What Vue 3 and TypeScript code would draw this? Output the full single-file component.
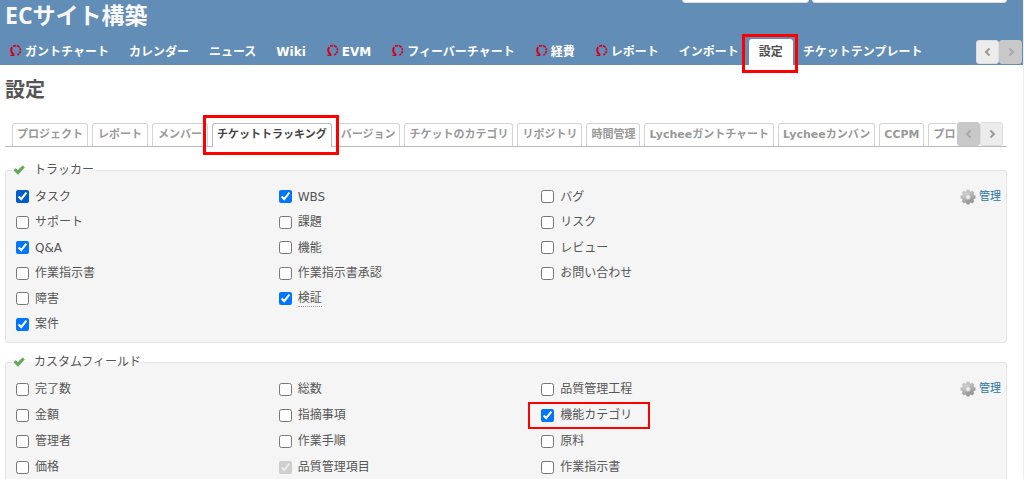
<script setup lang="ts">
import { ref } from 'vue'

interface NavItem { text: string; icon?: boolean; selected?: boolean }
interface Choice { text: string; checked?: boolean; disabled?: boolean; hovered?: boolean; hint?: string; marked?: boolean }
interface Group { id: string; title: string; choices: Choice[] }

const nav: NavItem[] = [
  { text: 'ガントチャート', icon: true },
  { text: 'カレンダー' },
  { text: 'ニュース' },
  { text: 'Wiki' },
  { text: 'EVM', icon: true },
  { text: 'フィーバーチャート', icon: true },
  { text: '経費', icon: true },
  { text: 'レポート', icon: true },
  { text: 'インポート' },
  { text: '設定', selected: true },
  { text: 'チケットテンプレート' },
]

const tabs: string[] = [
  'プロジェクト', 'レポート', 'メンバー', 'チケットトラッキング', 'バージョン', 'チケットのカテゴリ',
  'リポジトリ', '時間管理', 'Lycheeガントチャート', 'Lycheeカンバン', 'CCPM', 'プロ',
]
const activeTab = 3

const groups = ref<Group[]>([
  {
    id: 'tracker',
    title: 'トラッカー',
    choices: [
      { text: 'タスク', checked: true, hovered: true }, { text: 'WBS', checked: true }, { text: 'バグ' },
      { text: 'サポート' }, { text: '課題' }, { text: 'リスク' },
      { text: 'Q&A', checked: true }, { text: '機能' }, { text: 'レビュー' },
      { text: '作業指示書' }, { text: '作業指示書承認' }, { text: 'お問い合わせ' },
      { text: '障害' }, { text: '検証', checked: true, hint: '検証' }, { text: '' },
      { text: '案件', checked: true },
    ],
  },
  {
    id: 'field',
    title: 'カスタムフィールド',
    choices: [
      { text: '完了数' }, { text: '総数' }, { text: '品質管理工程' },
      { text: '金額' }, { text: '指摘事項' }, { text: '機能カテゴリ', checked: true, marked: true },
      { text: '管理者' }, { text: '作業手順' }, { text: '原料' },
      { text: '価格' }, { text: '品質管理項目', checked: true, disabled: true }, { text: '作業指示書' },
    ],
  },
])
</script>

<template>
  <div class="page">
    <header class="header">
      <div class="quick">
        <input class="search" type="text" aria-label="検索" />
        <select class="jump" aria-label="プロジェクトへ移動"></select>
      </div>
      <h1>ECサイト構築</h1>
      <div class="nav-row">
        <nav class="nav">
          <a v-for="n in nav" :key="n.text" href="#" :class="{ selected: n.selected }">
            <svg v-if="n.icon" class="ring" viewBox="0 0 13 13" aria-hidden="true">
              <path d="M4.6 10.3A4.8 4.8 0 0 1 3.2 3.2" stroke-width="2" />
              <path d="M4.1 2.4A4.8 4.8 0 0 1 10.6 3.6" stroke-width="1.7" stroke-dasharray="3.2 0.7" />
              <path d="M11 4.4A4.8 4.8 0 0 1 8 11" stroke-width="1.7" stroke-dasharray="2 0.8" />
              <path d="M1.4 11.4H4.8V9.6" stroke-width="1.2" />
            </svg>
            <span>{{ n.text }}</span>
          </a>
        </nav>
        <div class="arrows">
          <button type="button" aria-label="前へ"><svg viewBox="0 0 8 10"><path d="M5.5 1.5L2 5l3.5 3.5" /></svg></button>
          <button type="button" class="off" disabled aria-label="次へ"><svg viewBox="0 0 8 10"><path d="M2.5 1.5L6 5 2.5 8.5" /></svg></button>
        </div>
      </div>
    </header>

    <main class="content">
      <h2>設定</h2>
      <div class="tab-row">
        <div class="tabs">
          <a v-for="(t, i) in tabs" :key="i" href="#" :class="{ selected: i === activeTab }">{{ t }}</a>
        </div>
        <div class="arrows">
          <button type="button" class="off" disabled aria-label="前のタブ"><svg viewBox="0 0 8 10"><path d="M5.5 1.5L2 5l3.5 3.5" /></svg></button>
          <button type="button" aria-label="次のタブ"><svg viewBox="0 0 8 10"><path d="M2.5 1.5L6 5 2.5 8.5" /></svg></button>
        </div>
      </div>

      <fieldset v-for="g in groups" :key="g.id" :class="g.id">
        <legend>
          <svg class="tick" viewBox="0 0 12 10" aria-hidden="true"><path d="M0.8 5.2L3 3.6 4.8 5.6 9.6 0.8 11.4 2.4 5 9.4Z" /></svg>
          <span>{{ g.title }}</span>
        </legend>
        <div class="body">
          <div class="choices">
            <div v-for="(c, i) in g.choices" :key="i" class="cell">
              <label v-if="c.text" :class="{ marked: c.marked }">
                <input v-model="c.checked" type="checkbox" :disabled="c.disabled" :class="{ hovered: c.hovered }" />
                <span :class="{ hint: c.hint }" :title="c.hint">{{ c.text }}</span>
              </label>
            </div>
          </div>
          <a class="manage" href="#">
            <svg class="gear" viewBox="0 0 16 16" aria-hidden="true">
              <defs>
                <linearGradient :id="'metal-' + g.id" x1="0" y1="0" x2="0.6" y2="1">
                  <stop offset="0" stop-color="#dadada" />
                  <stop offset="1" stop-color="#959595" />
                </linearGradient>
              </defs>
              <g :stroke="`url(#metal-${g.id})`" :fill="`url(#metal-${g.id})`">
                <circle cx="8" cy="8" r="4.4" fill="none" stroke-width="3.6" />
                <path d="M6.5 0.4h3l0.5 3h-4zM6.5 15.6h3l0.5-3h-4zM0.4 6.5v3l3 0.5v-4zM15.6 6.5v3l-3 0.5v-4zM1.6 3.8L3.8 1.6 6 3.4 3.4 6zM14.4 3.8L12.2 1.6 10 3.4 12.6 6zM1.6 12.2L3.8 14.4 6 12.6 3.4 10zM14.4 12.2L12.2 14.4 10 12.6 12.6 10z" stroke="none" />
              </g>
              <circle cx="8" cy="8" r="2.3" fill="#f0f0f0" stroke="#a5a5a5" stroke-width="0.6" />
            </svg>
            <span>管理</span>
          </a>
        </div>
      </fieldset>
    </main>
  </div>
</template>

<style>
body {
  margin: 0;
  background: #fff;
}
</style>

<style scoped>
* {
  box-sizing: border-box;
}
.page {
  height: 100vh;
  overflow: hidden;
  border-right: 1px solid #eee;
  color: #555;
  font: 12px/20px "DejaVu Sans", "Noto Sans CJK JP", sans-serif;
}
a {
  text-decoration: none;
}
.header {
  background: #628db6;
}
.quick {
  display: flex;
  justify-content: flex-end;
  gap: 3px;
  height: 3px;
  margin-right: 16px;
  align-items: flex-end;
}
.search,
.jump {
  height: 24px;
  padding: 0;
  border: 1px solid #ddd;
  border-radius: 3px;
  background: #fff;
  appearance: none;
}
.search {
  width: 127px;
}
.jump {
  width: 195px;
}
h1 {
  margin: 0;
  padding: 0 5px;
  height: 36px;
  color: #f8f8f8;
  font: bold 23px/24px "Open Sans", "Noto Sans CJK JP", sans-serif;
}
.nav-row {
  display: flex;
  align-items: flex-end;
  justify-content: space-between;
}
.nav {
  display: flex;
  margin-left: -1px;
}
.nav a {
  position: relative;
  display: flex;
  align-items: center;
  gap: 3px;
  height: 26px;
  padding: 0 10px;
  color: #fff;
  font-weight: bold;
  white-space: nowrap;
  border-radius: 3px 3px 0 0;
}
.nav a.selected {
  background: #fff;
  color: #505050;
}
.nav a.selected::after {
  content: "";
  position: absolute;
  inset: -5px -5px -8px -7px;
  border: 3px solid #f00;
}
.ring {
  width: 13px;
  height: 13px;
  margin-bottom: 3px;
  fill: none;
  stroke: #d8001c;
}
.arrows {
  display: flex;
  flex: none;
}
.nav-row .arrows {
  padding: 0 1px 1px 0;
}
.arrows button {
  display: grid;
  place-items: center;
  width: 23px;
  height: 24px;
  padding: 0;
  border: 1px solid #ddd;
  border-radius: 3px;
  background: #ececec;
}
.arrows button.off {
  border-color: #c8c8c8;
  background: #c8c8c8;
}
.arrows svg {
  width: 8px;
  height: 10px;
  fill: none;
  stroke: #999;
  stroke-width: 2;
}
.arrows .off svg {
  stroke: #a8a8a8;
}
.content {
  padding: 0 16px 0 5px;
}
h2 {
  margin: 0;
  padding: 10px 0 17px;
  font: bold 20px/30px "Open Sans", "Noto Sans CJK JP", sans-serif;
}
.tab-row {
  display: flex;
  align-items: flex-end;
  padding-right: 4px;
  border-bottom: 1px solid #bbb;
}
.tabs {
  display: flex;
  flex: 1;
  gap: 4px;
  min-width: 0;
  padding-left: 7px;
  overflow-x: clip;
}
.tabs a {
  position: relative;
  flex: none;
  height: 23px;
  padding: 0 4px;
  border: 1px solid #d4d4d4;
  border-bottom: 0;
  border-radius: 3px 3px 0 0;
  color: #999;
  font-size: 11px;
  line-height: 22px;
  font-weight: bold;
  background: #fff;
}
.tabs a:nth-child(2),
.tabs a:nth-child(3) {
  padding: 0 5px;
}
.tabs a:last-child {
  min-width: 60px;
}
.tabs a.selected {
  z-index: 1;
  height: 24px;
  margin-bottom: -1px;
  border-color: #bbb;
  color: #444;
}
.tabs a.selected::after {
  content: "";
  position: absolute;
  inset: -9px -8px -8px -10px;
  border: 3px solid #f00;
}
fieldset {
  min-width: 0;
  margin: 13px 0 0;
  padding: 4px 5px 5px 10px;
  border: 1px solid #e4e4e4;
  border-radius: 3px;
  background: #f5f5f5;
}
fieldset + fieldset {
  margin-top: 9px;
}
legend {
  display: flex;
  align-items: center;
  gap: 9px;
  margin-left: -4px;
  padding: 0 2px 0 1px;
}
.tick {
  width: 12px;
  height: 10px;
  fill: #5eae55;
  stroke: #4c9545;
  stroke-width: 0.5;
}
.body {
  display: flex;
  align-items: flex-start;
  justify-content: space-between;
}
.choices {
  display: grid;
  grid-template-columns: repeat(3, 1fr);
  grid-auto-rows: 25px 26px;
  width: 80%;
}
.field .choices {
  grid-auto-rows: 26px;
}
.cell {
  display: flex;
  align-items: center;
}
label {
  position: relative;
  display: flex;
  align-items: center;
  gap: 6px;
}
label input {
  width: 13px;
  height: 13px;
  margin: 0;
}
.hovered {
  accent-color: #005cc8;
}
.hint {
  line-height: 16px;
  border-bottom: 1px dotted #999;
}
.marked::after {
  content: "";
  position: absolute;
  inset: -3px -18px -4px -13px;
  border: 2px solid #f00;
}
.manage {
  display: flex;
  align-items: center;
  gap: 3px;
  height: 26px;
  color: #2a76a8;
  font-size: 11px;
}
.gear {
  width: 16px;
  height: 16px;
}
</style>
